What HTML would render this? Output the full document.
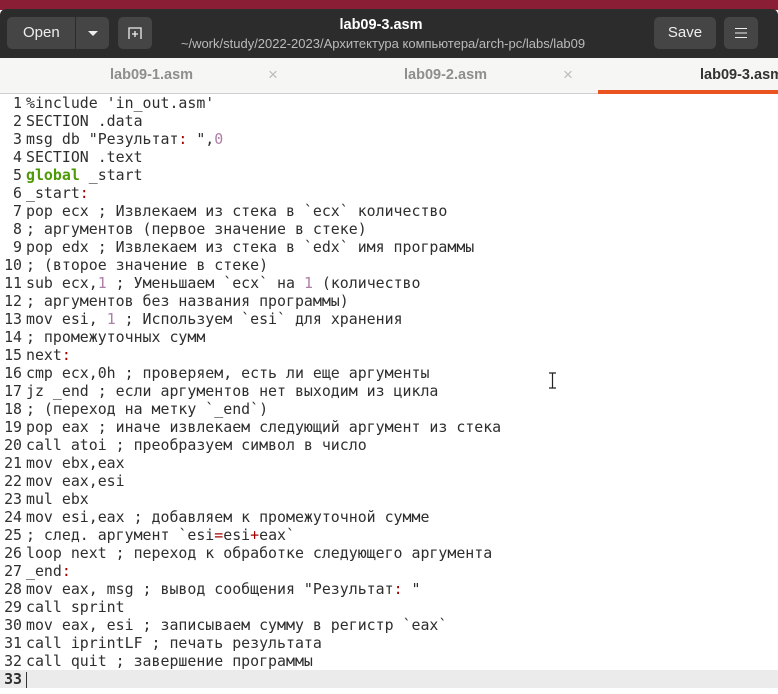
<!DOCTYPE html>
<html><head><meta charset="utf-8"><style>
*{margin:0;padding:0;box-sizing:border-box}
body{width:778px;height:694px;overflow:hidden;background:#fff;font-family:"Liberation Sans","DejaVu Sans",sans-serif;position:relative}
.top{position:absolute;left:0;top:0;width:778px;height:10px;background:#8a1e35}
.hdr{position:absolute;left:0;top:9px;width:778px;height:49px;background:#2c2c2c;border-radius:6px 6px 0 0}
.btn{position:absolute;top:8px;height:32px;background:#454545;border-radius:5px;color:#eee;font-size:15px;line-height:32px;text-align:center}
.title{position:absolute;left:0;width:778px;text-align:center;color:#fff;white-space:nowrap}
.tabs{position:absolute;left:0;top:58px;width:778px;height:36px;background:#f6f6f5;border-bottom:1px solid #cfcfcf}
.tab{position:absolute;top:0;height:36px;line-height:34px;font-size:14.5px;font-weight:bold;color:#8e8e8e;white-space:nowrap}
.x{position:absolute;top:0;line-height:34px;color:#bbb;font-size:17px}
.code{position:absolute;left:0;top:94px;width:778px;font-family:"DejaVu Sans Mono","Liberation Mono",monospace;font-size:14.9px;color:#2e2e2e}
.l{height:18px;line-height:18px;white-space:pre;position:relative}
.n{display:inline-block;width:22px;text-align:right;margin-right:4px;color:#2e2e2e}
.c{color:#a40000}.g{color:#4e9a06;font-weight:bold}.p{color:#ad7fa8}
.cur{background:#ebebeb}
</style></head><body>
<div class="top"></div>
<div class="hdr">
<div class="btn" style="left:7px;width:102px;text-align:left;padding-left:16px;border-radius:5px">Open</div>
<div style="position:absolute;left:75px;top:8px;width:1px;height:32px;background:#2c2c2c"></div>
<div style="position:absolute;left:88px;top:22px;width:0;height:0;border-left:5px solid transparent;border-right:5px solid transparent;border-top:5px solid #eee"></div>
<div class="btn" style="left:118px;width:34px"><svg width="16" height="16" viewBox="0 0 16 16" style="margin-top:8px"><path d="M2 14V3h12v11M8 6v6M5 9h6" fill="none" stroke="#eee" stroke-width="1.3"/></svg></div>
<div class="title" style="top:8px;font-size:14.5px;font-weight:bold;left:-8px">lab09-3.asm</div>
<div class="title" style="top:27px;font-size:13px;color:#bbb;left:-6px">~/work/study/2022-2023/Архитектура компьютера/arch-pc/labs/lab09</div>
<div class="btn" style="left:654px;width:62px">Save</div>
<div class="btn" style="left:724px;width:34px"><svg width="12" height="10" viewBox="0 0 12 10" style="margin-top:11px"><path d="M0 .5h12M0 5h12M0 9.5h12" stroke="#eee" stroke-width="1"/></svg></div>
</div>
<div class="tabs">
<div class="tab" style="left:110px">lab09-1.asm</div><div class="x" style="left:268px">×</div>
<div class="tab" style="left:404px">lab09-2.asm</div><div class="x" style="left:563px">×</div>
<div class="tab" style="left:700px;color:#333">lab09-3.asm</div>
<div style="position:absolute;left:598px;top:32px;width:180px;height:4px;background:#e95420"></div>
</div>
<div class="code">
<div class="l"><span class="n">1</span>%include 'in_out.asm'</div>
<div class="l"><span class="n">2</span>SECTION .data</div>
<div class="l"><span class="n">3</span>msg db "Результат<span class="c">:</span> ",<span class="p">0</span></div>
<div class="l"><span class="n">4</span>SECTION .text</div>
<div class="l"><span class="n">5</span><span class="g">global</span> _start</div>
<div class="l"><span class="n">6</span>_start<span class="c">:</span></div>
<div class="l"><span class="n">7</span>pop ecx ; Извлекаем из стека в `ecx` количество</div>
<div class="l"><span class="n">8</span>; аргументов (первое значение в стеке)</div>
<div class="l"><span class="n">9</span>pop edx ; Извлекаем из стека в `edx` имя программы</div>
<div class="l"><span class="n">10</span>; (второе значение в стеке)</div>
<div class="l"><span class="n">11</span>sub ecx,<span class="p">1</span> ; Уменьшаем `ecx` на <span class="p">1</span> (количество</div>
<div class="l"><span class="n">12</span>; аргументов без названия программы)</div>
<div class="l"><span class="n">13</span>mov esi, <span class="p">1</span> ; Используем `esi` для хранения</div>
<div class="l"><span class="n">14</span>; промежуточных сумм</div>
<div class="l"><span class="n">15</span>next<span class="c">:</span></div>
<div class="l"><span class="n">16</span>cmp ecx,0h ; проверяем, есть ли еще аргументы</div>
<div class="l"><span class="n">17</span>jz _end ; если аргументов нет выходим из цикла</div>
<div class="l"><span class="n">18</span>; (переход на метку `_end`)</div>
<div class="l"><span class="n">19</span>pop eax ; иначе извлекаем следующий аргумент из стека</div>
<div class="l"><span class="n">20</span>call atoi ; преобразуем символ в число</div>
<div class="l"><span class="n">21</span>mov ebx,eax</div>
<div class="l"><span class="n">22</span>mov eax,esi</div>
<div class="l"><span class="n">23</span>mul ebx</div>
<div class="l"><span class="n">24</span>mov esi,eax ; добавляем к промежуточной сумме</div>
<div class="l"><span class="n">25</span>; след. аргумент `esi<span class="c">=</span>esi<span class="c">+</span>eax`</div>
<div class="l"><span class="n">26</span>loop next ; переход к обработке следующего аргумента</div>
<div class="l"><span class="n">27</span>_end<span class="c">:</span></div>
<div class="l"><span class="n">28</span>mov eax, msg ; вывод сообщения "Результат<span class="c">:</span> "</div>
<div class="l"><span class="n">29</span>call sprint</div>
<div class="l"><span class="n">30</span>mov eax, esi ; записываем сумму в регистр `eax`</div>
<div class="l"><span class="n">31</span>call iprintLF ; печать результата</div>
<div class="l"><span class="n">32</span>call quit ; завершение программы</div>
<div class="l cur"><span class="n" style="font-weight:bold">33</span><span style="display:inline-block;width:1px;height:16px;background:#333;vertical-align:middle"></span></div>
</div>
<svg style="position:absolute;left:548px;top:372px" width="9" height="17" viewBox="0 0 9 17"><path d="M1 1h7M1 16h7M4.5 1v15" stroke="#222" stroke-width="1.2" fill="none"/></svg>
</body></html>
